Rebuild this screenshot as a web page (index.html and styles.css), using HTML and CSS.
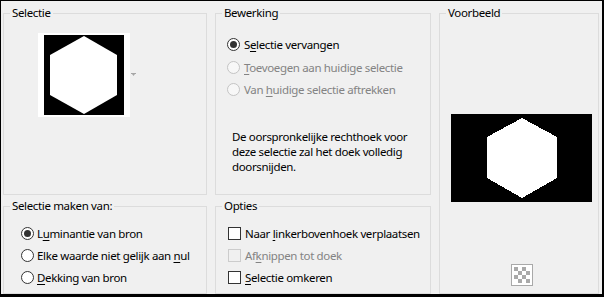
FILE: index.html
```html
<!DOCTYPE html>
<html lang="nl">
<head>
    <meta charset="UTF-8">
    <title>Selectie uit masker</title>
    <link rel="stylesheet" href="styles.css">
</head>
<body>

    <div class="dialog">

        <fieldset class="group group-selectie">
            <legend>Selectie</legend>
            <div class="thumb-row">
                <div class="thumb">
                    <svg width="80" height="80" viewBox="0 0 80 80">
                        <rect width="80" height="80" fill="#000"/>
                        <polygon points="40,1 73,20 73,60 40,79 6,60 6,20" fill="#fff"/>
                    </svg>
                </div>
                <svg class="drop-arrow" width="6" height="4" viewBox="0 0 6 4">
                    <path d="M0 0.5h5" stroke="#a6a6a6" stroke-width="1"/>
                    <path d="M1 1h3l-1.5 2z" fill="#a6a6a6"/>
                </svg>
            </div>
        </fieldset>

        <fieldset class="group group-bewerking">
            <legend>Bewerking</legend>
            <div class="opts">
                <div class="opt"><span class="radio is-checked"></span><span>S<u>e</u>lectie vervangen</span></div>
                <div class="opt is-disabled"><span class="radio"></span><span><u>T</u>oevoegen aan huidige selectie</span></div>
                <div class="opt is-disabled"><span class="radio"></span><span>Van <u>h</u>uidige selectie aftrekken</span></div>
            </div>
            <p class="note">De oorspronkelijke rechthoek voor<br>deze selectie zal het doek volledig<br>doorsnijden.</p>
        </fieldset>

        <fieldset class="group group-voorbeeld">
            <legend>Voorbeeld</legend>
            <div class="preview">
                <svg width="141" height="88" viewBox="0 0 141 88" shape-rendering="crispEdges">
                    <rect width="141" height="88" fill="#000"/>
                    <polygon points="71,4 106,23 106,64 71,84 36,64 36,23" fill="#fff"/>
                </svg>
            </div>
            <div class="checker-wrap">
                <div class="checker">
                    <span></span><span></span><span></span><span></span>
                    <span></span><span></span><span></span><span></span>
                    <span></span><span></span><span></span><span></span>
                    <span></span><span></span><span></span><span></span>
                </div>
            </div>
        </fieldset>

        <fieldset class="group group-bron">
            <legend>Selectie maken van:</legend>
            <div class="opts">
                <div class="opt"><span class="radio is-checked"></span><span>L<u>u</u>minantie van bron</span></div>
                <div class="opt"><span class="radio"></span><span>Elke waarde niet gelijk aan <u>n</u>ul</span></div>
                <div class="opt"><span class="radio"></span><span><u>D</u>ekking van bron</span></div>
            </div>
        </fieldset>

        <fieldset class="group group-opties">
            <legend>Opties</legend>
            <div class="opts">
                <div class="opt"><span class="check"></span><span>Naar <u>l</u>inkerbovenhoek verplaatsen</span></div>
                <div class="opt is-disabled"><span class="check"></span><span>Af<u>k</u>nippen tot doek</span></div>
                <div class="opt"><span class="check"></span><span><u>S</u>electie omkeren</span></div>
            </div>
        </fieldset>

    </div>

</body>
</html>
```

FILE: styles.css
```css
:root { --bg: #f0f0f0; --line: #dcdcdc; --text: #000; --muted: #838383; }
body { margin: 0; background: #000; font-family: "Noto Sans", sans-serif; font-size: 11.5px; letter-spacing: -0.35px; color: var(--text); }

.dialog {
    margin: 1px 2px 3px 1px;
    height: 293px;
    box-sizing: border-box;
    padding: 4px 1px 0 2px;
    background: var(--bg);
    display: grid;
    grid-template-columns: 204px 216px 160px;
    grid-template-rows: 190px 96px;
    column-gap: 8px;
    row-gap: 3px;
}
.group-bewerking { margin-right: 2px; }
.group-voorbeeld { grid-column: 3; grid-row: 1 / 3; margin-left: 2px; }
.group-bron { grid-column: 1; grid-row: 2; }
.group-opties { grid-column: 2; grid-row: 2; margin-right: 2px; }

/* GROEPSVAKKEN */
.group {
    margin: 0;
    padding: 0;
    min-width: 0;
    border: 1px solid var(--line);
}
.group legend {
    margin-left: 6px;
    padding: 0 2px;
    line-height: 16px;
}

/* SELECTIE */
.thumb-row { display: flex; align-items: center; padding: 12px 0 0 34px; }
.thumb { background: #fff; padding: 2px 6px; display: flex; }
.thumb svg { display: block; }
.drop-arrow { margin-left: 1px; margin-top: -1px; }

/* OPTIES */
.opts { display: flex; flex-direction: column; padding-top: 12px; padding-left: 11px; }
.opt { height: 22px; display: flex; align-items: center; gap: 4px; white-space: nowrap; }
.opt:first-child { margin-bottom: 1px; }
.opt u { text-underline-offset: 2px; }
.is-disabled { color: var(--muted); }

.radio {
    width: 11px; height: 11px;
    border: 1px solid #333;
    border-radius: 50%;
    background: #fff;
    display: flex; align-items: center; justify-content: center;
    flex: none;
}
.radio.is-checked::after { content: ""; width: 7px; height: 7px; border-radius: 50%; background: #333; }
.is-disabled .radio { border-color: #c4c4c4; background: #f7f7f7; }

.check { width: 11px; height: 11px; border: 1px solid #333; background: #fff; flex: none; }
.is-disabled .check { border-color: #cccccc; background: #f0f0f0; }

.note { margin: 29px 0 0 16px; line-height: 15px; }

.group-bron .opts { padding-top: 8px; padding-left: 17px; gap: 0; }
.group-bron .opt { gap: 3px; }
.group-bron .opt:first-child { margin-bottom: 0; }
.group-opties .opts { padding-top: 8px; padding-left: 12px; }
.group-opties .opt:first-child { margin-bottom: 0; }

/* VOORBEELD */
.preview { margin: 93px 0 0 11px; display: flex; }
.preview svg { display: block; }
.checker-wrap { width: 141px; margin: 62px 0 0 11px; display: flex; justify-content: center; }
.checker {
    border: 1px solid #a9a9a9;
    padding: 2px;
    display: grid;
    grid-template-columns: repeat(4, 4px);
    grid-auto-rows: 4px;
    background: #fff;
}
.checker span:nth-child(8n+1), .checker span:nth-child(8n+3),
.checker span:nth-child(8n+6), .checker span:nth-child(8n+8) { background: #a9a9a9; }
```
